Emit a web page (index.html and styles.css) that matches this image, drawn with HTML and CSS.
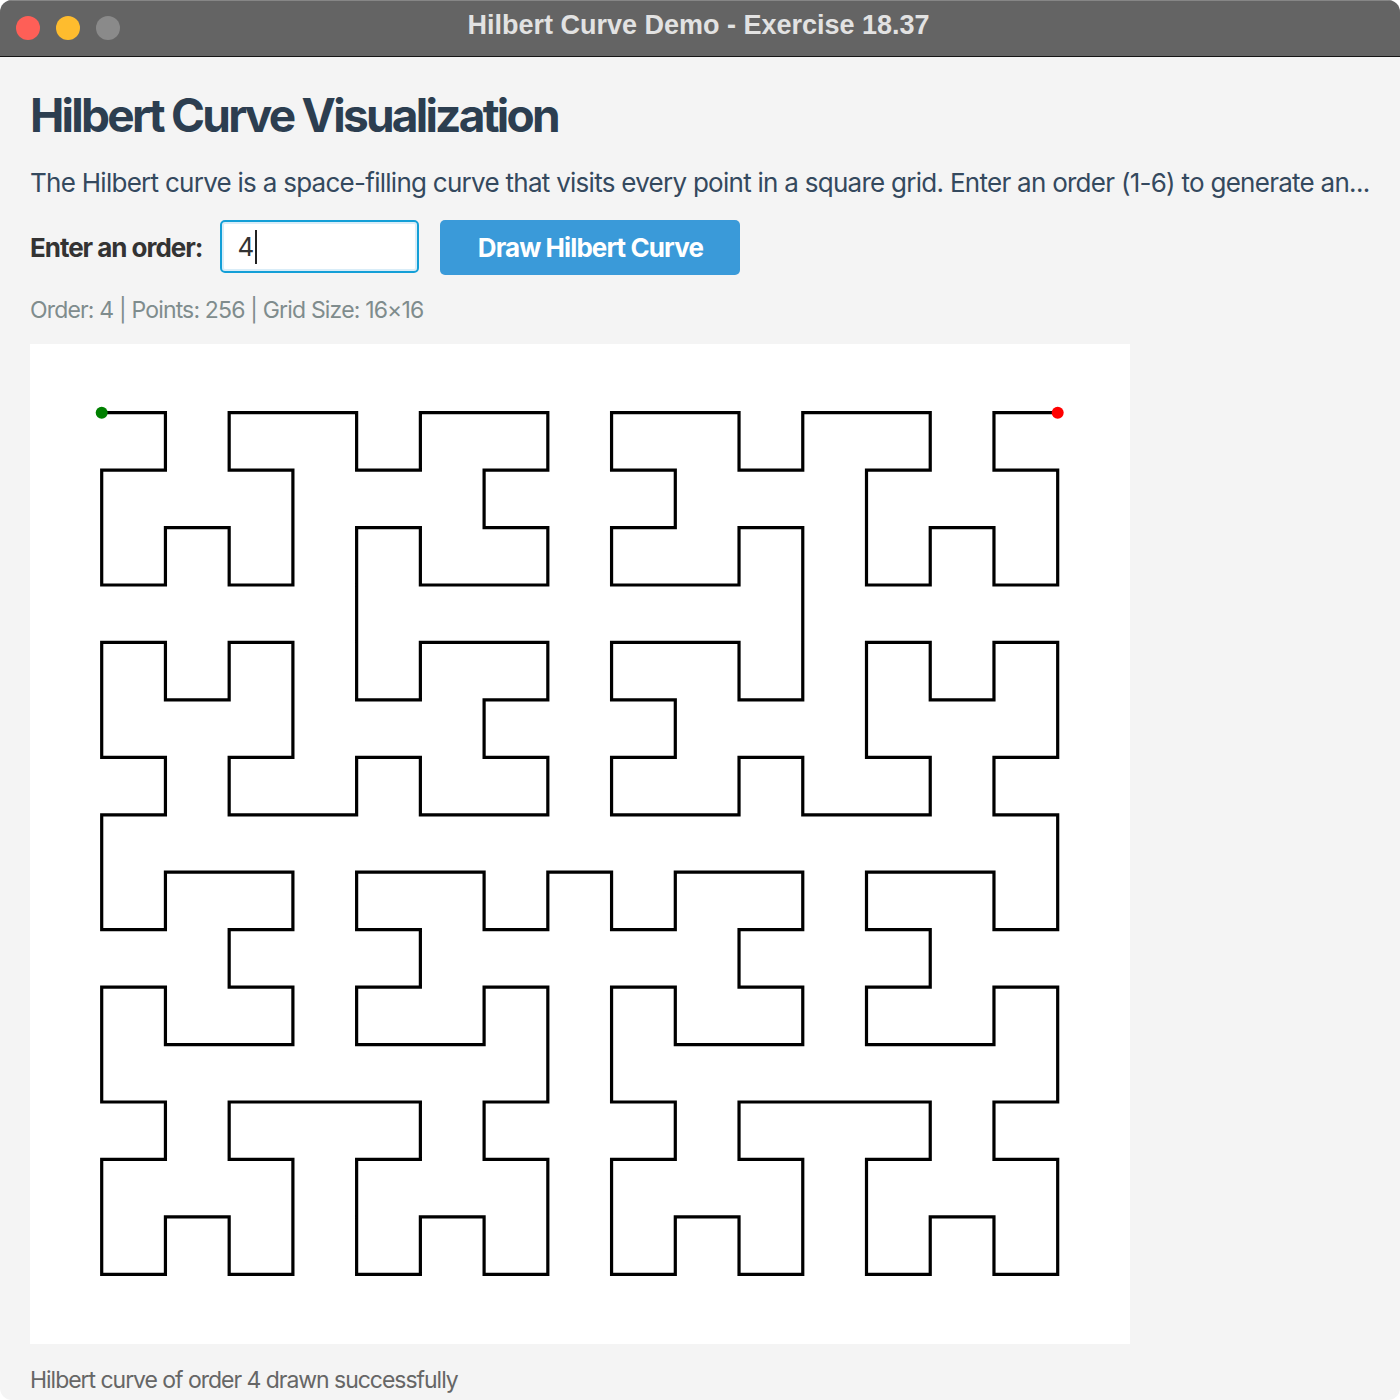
FILE: index.html
```html
<!DOCTYPE html>
<html lang="en">
<head>
<meta charset="utf-8">
<title>Hilbert Curve Demo - Exercise 18.37</title>
<link rel="stylesheet" href="styles.css">
</head>
<body>
<div class="window">
  <div class="titlebar">
    <div class="lights">
      <span class="light red"></span>
      <span class="light yellow"></span>
      <span class="light grey"></span>
    </div>
    <div class="title">Hilbert Curve Demo - Exercise 18.37</div>
  </div>
  <div class="content">
    <h1 class="heading">Hilbert Curve Visualization</h1>
    <p class="desc">The Hilbert curve is a space-filling curve that visits every point in a square grid. Enter an order (1-6) to generate an...</p>
    <div class="controls">
      <label class="label">Enter an order:</label>
      <div class="field"><span class="field-text">4</span><span class="caret"></span></div>
      <button class="btn">Draw Hilbert Curve</button>
    </div>
    <div class="stats">Order: 4 | Points: 256 | Grid Size: 16×16</div>
    <div class="canvas">
      <svg id="curve" class="curve" width="1100" height="1000" viewBox="0 0 1100 1000">
        <polyline id="path" class="path" points=""></polyline>
        <circle id="start" class="start" cx="71.7" cy="68.7" r="6"></circle>
        <circle id="end" class="end" cx="1027.7" cy="68.7" r="6"></circle>
      </svg>
    </div>
    <div class="status">Hilbert curve of order 4 drawn successfully</div>
  </div>
</div>
<script src="script.js"></script>
</body>
</html>
```
FILE: styles.css
```css
html, body {
  margin: 0;
  padding: 0;
  background: #ffffff;
}
.window {
  width: 1400px;
  height: 1400px;
  border-radius: 12px;
  overflow: hidden;
  background: #f4f4f4;
  display: flex;
  flex-direction: column;
  font-family: Inter, "Noto Sans", sans-serif;
}
.titlebar {
  height: 56px;
  flex: 0 0 56px;
  background: #646464;
  border-bottom: 1px solid #151515;
  box-shadow: inset 0 1px 0 #868686;
  position: relative;
  display: flex;
  align-items: center;
  justify-content: center;
  box-sizing: content-box;
}
.lights {
  position: absolute;
  left: 16px;
  top: 16px;
  display: flex;
  gap: 16px;
}
.light {
  width: 24px;
  height: 24px;
  border-radius: 50%;
  display: block;
}
.red { background: #fe5f57; }
.yellow { background: #febc2e; }
.grey { background: #8a8a8a; }
.title {
  font-family: "Liberation Sans", Arial, sans-serif;
  font-weight: 700;
  font-size: 27px;
  color: #e2e2e2;
  padding-bottom: 6px;
  margin-left: -3px;
}
.content {
  padding: 30px 30px 0 30px;
  display: flex;
  flex-direction: column;
}
.heading {
  margin: 0;
  font-size: 46px;
  line-height: 56px;
  font-weight: 700;
  color: #2c3e50;
  letter-spacing: -0.06em;
}
.desc {
  margin: 23px 0 0 0;
  font-size: 26px;
  line-height: 34px;
  color: #34495e;
  letter-spacing: -0.028em;
  white-space: nowrap;
  overflow: hidden;
  text-overflow: ellipsis;
}
.controls {
  margin-top: 20px;
  display: flex;
  align-items: center;
  height: 55px;
}
.label {
  font-size: 26px;
  font-weight: 700;
  color: #333333;
  letter-spacing: -0.04em;
  margin-right: 18px;
}
.field {
  width: 199px;
  height: 53px;
  box-sizing: border-box;
  border: 2px solid #139fd7;
  border-radius: 5px;
  background: #ffffff;
  box-shadow: inset 0 0 0 2px #d9edf8;
  display: flex;
  align-items: center;
  padding-left: 15px;
  align-self: flex-start;
}
.field-text {
  font-size: 26px;
  color: #333333;
}
.caret {
  display: block;
  width: 2px;
  height: 34px;
  background: #222222;
  margin-left: 1px;
}
.btn {
  margin-left: 21px;
  width: 300px;
  height: 55px;
  border: none;
  border-radius: 5px;
  background: #3a9ad9;
  color: #ffffff;
  font-family: Inter, "Noto Sans", sans-serif;
  font-size: 26px;
  font-weight: 700;
  letter-spacing: -0.035em;
  padding: 0;
}
.stats {
  margin-top: 20px;
  font-size: 23px;
  line-height: 30px;
  color: #7f8c8d;
  letter-spacing: -0.036em;
}
.canvas {
  margin-top: 19px;
  width: 1100px;
  height: 1000px;
  background: #ffffff;
}
.curve {
  display: block;
}
.path {
  fill: none;
  stroke: #000000;
  stroke-width: 3.2;
  stroke-linejoin: miter;
  stroke-linecap: square;
}
.start { fill: #008000; }
.end { fill: #ff0000; }
.status {
  margin-top: 21px;
  font-size: 23px;
  line-height: 30px;
  color: #666666;
  letter-spacing: -0.045em;
}
```
FILE: script.js
```js
(function () {
  var order = 4;
  var n = 1 << order;
  var x0 = 71.7, y0 = 68.7;
  var dx = (1027.7 - 71.7) / (n - 1);
  var dy = (930.3 - 68.7) / (n - 1);
  function d2xy(size, d) {
    var x = 0, y = 0, t = d;
    for (var s = 1; s < size; s *= 2) {
      var rx = 1 & (t >> 1);
      var ry = 1 & (t ^ rx);
      if (ry === 0) {
        if (rx === 1) { x = s - 1 - x; y = s - 1 - y; }
        var tmp = x; x = y; y = tmp;
      }
      x += s * rx;
      y += s * ry;
      t = t >> 2;
    }
    return [x, y];
  }
  var pts = [];
  for (var d = 0; d < n * n; d++) {
    var p = d2xy(n, d);
    pts.push((x0 + p[0] * dx).toFixed(2) + ',' + (y0 + p[1] * dy).toFixed(2));
  }
  document.getElementById('path').setAttribute('points', pts.join(' '));
  var last = d2xy(n, n * n - 1);
  var end = document.getElementById('end');
  end.setAttribute('cx', (x0 + last[0] * dx).toFixed(2));
  end.setAttribute('cy', (y0 + last[1] * dy).toFixed(2));
})();
```
